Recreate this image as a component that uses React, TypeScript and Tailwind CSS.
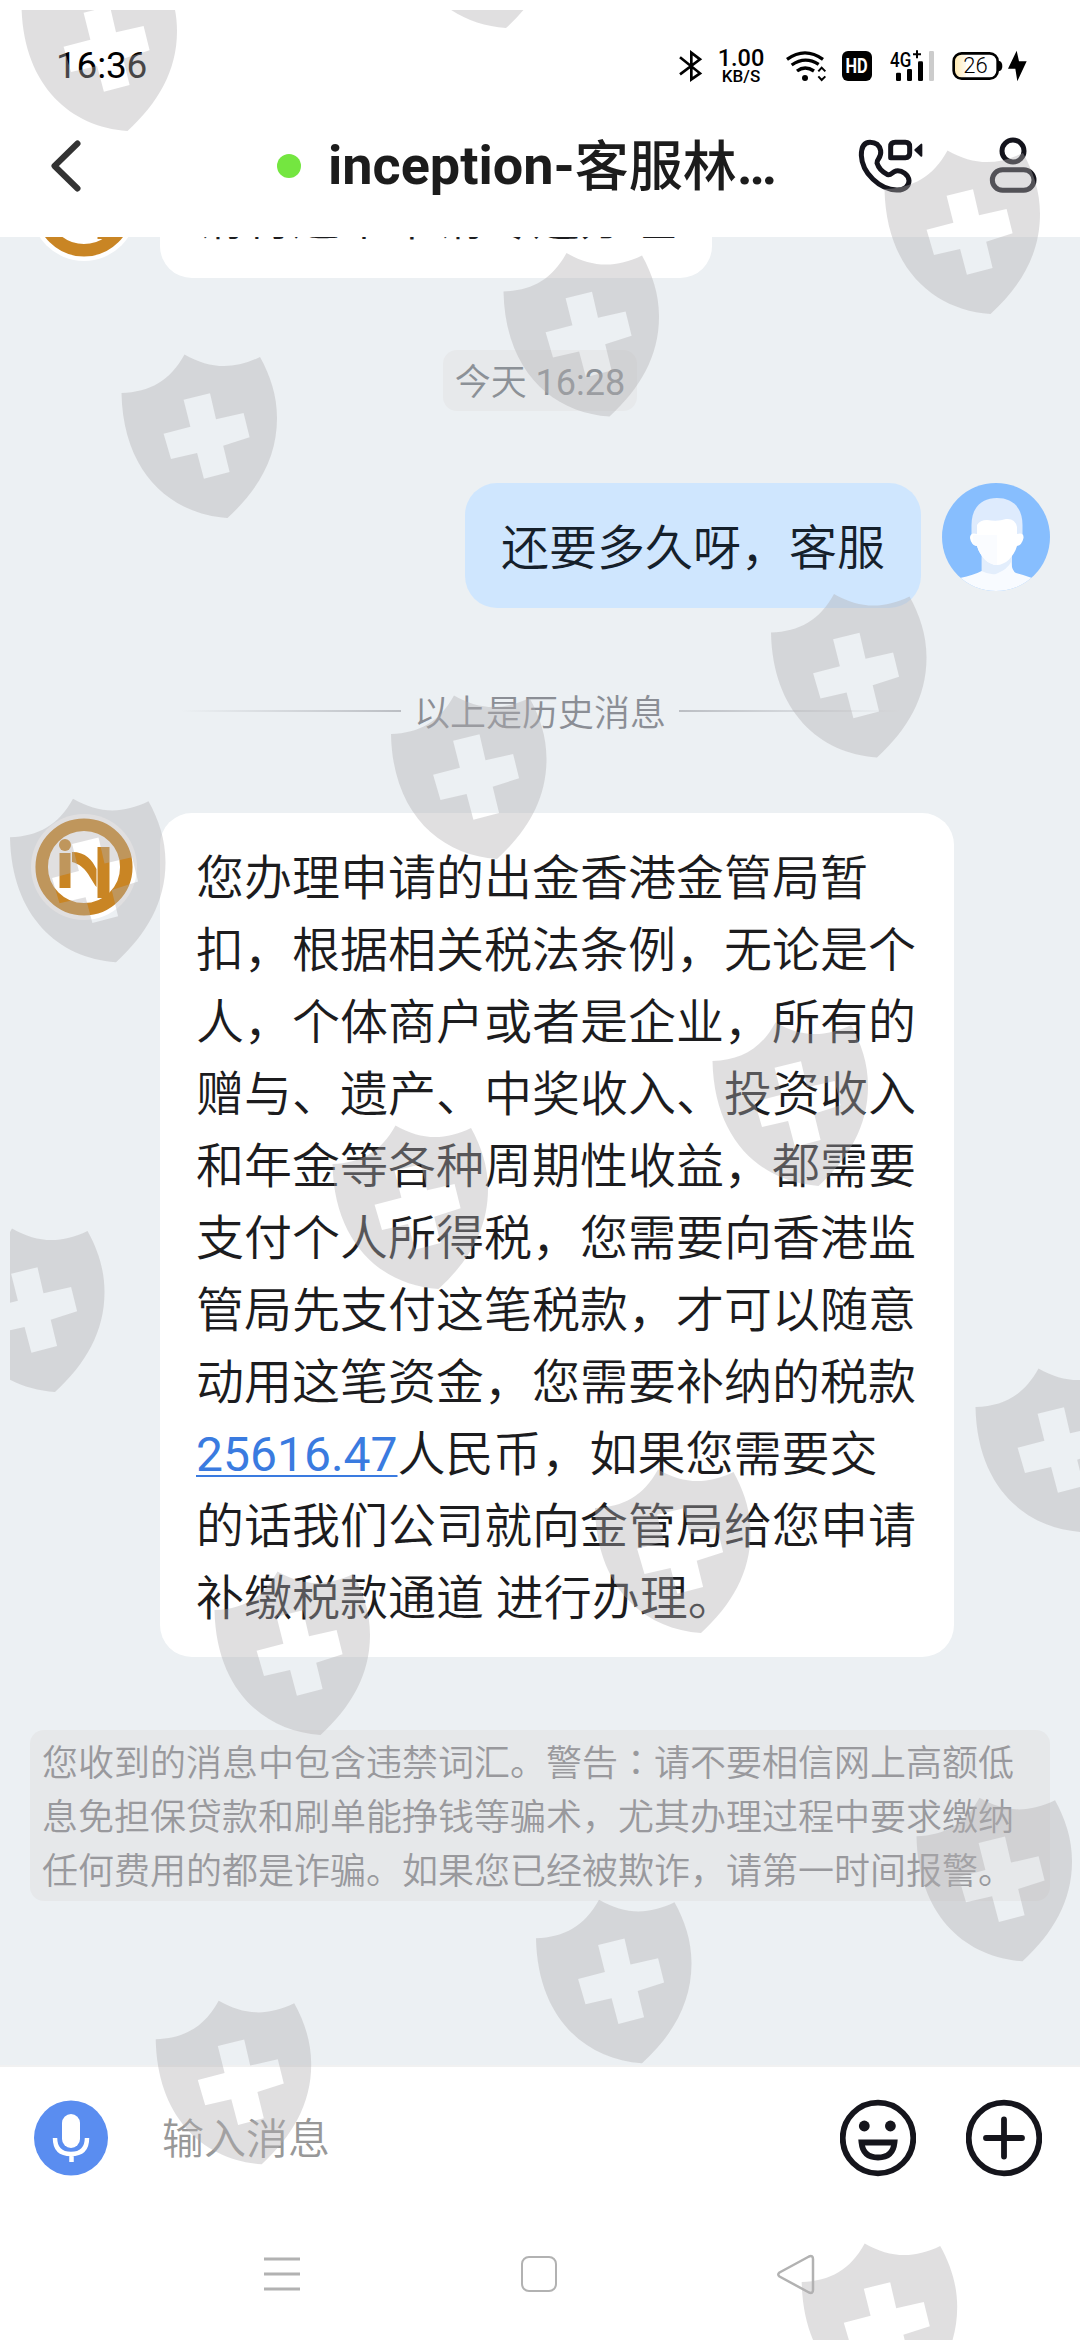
import type { ReactNode } from "react";

const messageLines: ReactNode[] = [
  "您办理申请的出金香港金管局暂",
  "扣，根据相关税法条例，无论是个",
  "人，个体商户或者是企业，所有的",
  "赠与、遗产、中奖收入、投资收入",
  "和年金等各种周期性收益，都需要",
  "支付个人所得税，您需要向香港监",
  "管局先支付这笔税款，才可以随意",
  "动用这笔资金，您需要补纳的税款",
  <>
    <a className="font-normal text-[#3a7be0] underline decoration-2 underline-offset-4">
      25616.47
    </a>
    人民币，如果您需要交
  </>,
  "的话我们公司就向金管局给您申请",
  "补缴税款通道 进行办理。",
];

const warningLines: ReactNode[] = [
  <>
    您收到的消息中包含违禁词汇。警告
    <span className="font-['Noto_Sans_CJK_TC',sans-serif]">：</span>
    请不要相信网上高额低
  </>,
  "息免担保贷款和刷单能挣钱等骗术，尤其办理过程中要求缴纳",
  "任何费用的都是诈骗。如果您已经被欺诈，请第一时间报警。",
];

// Top-left corner of every watermark shield on the screen
const shields = [
  [20, -37],
  [398.5, -140],
  [883, 146],
  [502, 248.5],
  [120, 350],
  [769.5, 589.5],
  [389.5, 691],
  [8.5, 794.3],
  [711, 1018],
  [331, 1121],
  [-52.5, 1224],
  [974, 1364],
  [593.5, 1465],
  [213, 1567],
  [915, 1793.3],
  [534.5, 1895.3],
  [154.2, 1996.3],
  [800.2, 2239],
];

function Watermark() {
  return (
    <svg
      className="absolute inset-0 pointer-events-none"
      width="1080"
      height="2340"
      viewBox="0 0 1080 2340"
    >
      <defs>
        <clipPath id="safe">
          <rect x="10" y="10" width="1070" height="2330" />
        </clipPath>
      </defs>
      <g clipPath="url(#safe)" fill="#b2b0b2" fillOpacity="0.4" fillRule="evenodd">
        {shields.map(([x, y], index) => (
          <path
            key={index}
            transform={`translate(${x} ${y})`}
            d="M1.5 43C30 42 50 31 64.5 4.5C90 19 113 20 140 7C150 25 157 45 157 68C157 108 138 140 107.5 168C50 164 3 122 1.5 43ZM63.6 49.7L90 43.3L96 69.3L123.6 63L129.6 87.3L103.2 95.7L109.6 122L83.9 128.7L77.1 103L51 109L43.6 83.7L70.4 76.7Z"
          />
        ))}
      </g>
    </svg>
  );
}

function StatusBar() {
  return (
    <div className="flex h-[88px] items-end justify-between pl-[56px] pr-[52px]">
      <span className="text-[37px] leading-[44px] tracking-[-0.2px] text-black">
        16:36
      </span>
      <div className="mb-[3px] flex h-[38px] items-center text-black">
        <svg width="26" height="32" viewBox="50 60 78 96" fill="none" stroke="#000" strokeWidth="8">
          <path d="M56 82L116 130L90 148V68L116 88L56 133" />
        </svg>
        <div className="mr-[2px] ml-[12px] flex w-[50px] flex-col items-center font-medium">
          <span className="text-[23.5px] leading-[20px]">1.00</span>
          <span className="text-[17px] leading-[16px]">KB/S</span>
        </div>
        <svg className="ml-[17px]" width="42" height="32" viewBox="370 60 126 96" fill="none" stroke="#000" strokeWidth="8">
          <path d="M376 88Q430 49 484 88M390 105Q430 77 471 103M406 123Q430 105 457 123" strokeWidth="10" />
          <circle cx="430" cy="144" r="9" fill="#000" stroke="none" />
          <path d="M470 124L480 113L491 124M470 139L480 150L491 139" strokeWidth="6" />
        </svg>
        <div className="ml-[15px] flex h-[30px] w-[30px] items-center justify-center rounded-[6px] bg-black">
          <span className="scale-x-[0.82] text-[20px] leading-none font-bold text-white">HD</span>
        </div>
        <div className="relative ml-[17px] h-[32px] w-[46px]">
          <svg width="46" height="32" viewBox="681 60 138 96">
            <rect x="702" y="128" width="15" height="25" rx="4" />
            <rect x="735" y="117" width="15" height="36" rx="4" />
            <rect x="768" y="94" width="15" height="59" rx="4" />
            <rect x="801" y="63" width="15" height="90" rx="4" fill="#ccc" />
            <path d="M753 73H777M765 61V85" stroke="#000" strokeWidth="6" />
          </svg>
          <span className="absolute top-[-1px] left-[1px] origin-left scale-x-[0.85] text-[20px] leading-[22px] font-medium">
            4G
          </span>
        </div>
        <div className="relative ml-[16px] h-[32px] w-[52px]">
          <svg width="52" height="32" viewBox="869 60 156 96">
            <defs>
              <linearGradient id="charge">
                <stop offset="0" stopColor="#ffe9ad" />
                <stop offset="1" stopColor="#fffaf0" />
              </linearGradient>
            </defs>
            <path d="M900 72H914V144H900Q879 144 879 122V94Q879 72 900 72Z" fill="url(#charge)" />
            <rect x="877" y="70" width="132" height="76" rx="24" fill="none" stroke="#000" strokeWidth="8" />
            <path d="M1012 92Q1023 94 1023 108Q1023 122 1012 124Z" />
          </svg>
          <span className="absolute inset-y-0 left-0 w-[49px] text-center text-[22px] leading-[32px] font-light">
            26
          </span>
        </div>
        <svg className="ml-[4px]" width="21" height="32" viewBox="1038 60 63 96">
          <path d="M1067 62L1041 116H1063L1069 154L1097 94H1074Z" />
        </svg>
      </div>
    </div>
  );
}

function Header() {
  return (
    <header className="flex h-[149px] items-center pt-[7px]">
      <svg className="ml-[48px] shrink-0" width="36" height="56" viewBox="48 138 36 56" fill="none">
        <path
          d="M77.5 143.5L54.5 166L77.5 188.5"
          stroke="#333"
          strokeWidth="6"
          strokeLinecap="round"
          strokeLinejoin="round"
        />
      </svg>
      <div className="ml-[193px] h-[24px] w-[24px] shrink-0 rounded-full bg-[#74e640]" />
      <h1 className="ml-[27px] w-[454px] text-[54px] leading-[64px] font-bold whitespace-nowrap text-[#1c1c1c]">
        inception-<span className="relative top-[2px] font-medium">客服林</span>…
      </h1>
      <svg className="ml-[76px]" width="68" height="60" viewBox="594 318 204 180" fill="none" stroke="#14141c" strokeWidth="15" strokeLinejoin="round">
        <path d="M630 337C612 337 604 352 604 376C606 430 660 479 710 480C734 481 747 468 747 452C746 434 726 420 708 423C696 426 694 437 683 434C668 427 655 412 651 399C650 386 665 385 662 362C658 344 646 337 630 337Z" />
        <path d="M692 383V350Q692 337 706 337H736Q749 337 749 350V370Q749 383 736 383Z" />
        <path d="M766 360L784 344V377Z" fill="#14141c" strokeWidth="6" />
      </svg>
      <svg className="ml-[63px]" width="48" height="60" viewBox="984 318 144 180" fill="none" stroke="#14141c" strokeWidth="15">
        <circle cx="1056" cy="363" r="33" />
        <rect x="994" y="419" width="125" height="62" rx="31" />
      </svg>
    </header>
  );
}

function AgentAvatar() {
  return (
    <svg className="shrink-0" width="108" height="108" viewBox="0 0 108 108">
      <circle cx="54" cy="54" r="53" fill="#fff" />
      <circle cx="54" cy="54" r="42.3" fill="none" stroke="#c98524" strokeWidth="12.5" />
      <g fill="#c98524">
        <circle cx="35" cy="32" r="6" />
        <rect x="29.5" y="40" width="11" height="35" />
        <path d="M42 39C56 39 62 47 66.5 56V74C60 66 57 53 42 49Z" />
        <rect x="67.5" y="34" width="12" height="51" />
      </g>
    </svg>
  );
}

function UserAvatar() {
  return (
    <svg className="shrink-0" width="108" height="108" viewBox="0 0 108 108">
      <defs>
        <clipPath id="round">
          <circle cx="54" cy="54" r="54" />
        </clipPath>
      </defs>
      <g clipPath="url(#round)">
        <rect width="108" height="108" fill="#87befe" />
        <path d="M39.6 72V89L54 96L70 89V72Z" fill="#e3eefc" />
        <path d="M18 95Q32 92 39.6 88Q47 92 54 91Q66 86 69 79Q70 88 74 90Q82 92 90 95V108H18Z" fill="#f8fbff" />
        <path d="M29.5 54V42C29.5 24 40 15 55 15S80.5 24 80.5 42V54Z" fill="#deebfd" />
        <path d="M35 42Q38 37 45 37Q56 39 64 36Q73 35 75 44V51Q82 49 81.5 55Q80 62 75 63C72 74 63 82 55 82S38 74 35 63Q29 62 28 55Q28 49 35 51Z" fill="#fff" />
        <path d="M55 52V82C47 82 38 74 35 63Q33 63 31 61V52Z" fill="#fafcff" />
      </g>
    </svg>
  );
}

function Composer() {
  return (
    <div className="flex h-[143px] items-center border-t-2 border-[#f1f1f1] bg-white pl-[34px]">
      <svg width="74" height="76" viewBox="0 0 74 76" fill="none">
        <ellipse cx="37" cy="38" rx="37" ry="37.5" fill="#5a8df0" />
        <rect x="28" y="14" width="18" height="34" rx="9" fill="#fff" />
        <path d="M21 38Q21 54 37 54T53 38M37.5 54V62" stroke="#fff" strokeWidth="4.5" />
      </svg>
      <span className="ml-[54px] flex-1 pt-[5px] text-[42px] leading-[60px] font-[350] text-[#989898]">
        输入消息
      </span>
      <svg width="76" height="78" viewBox="0 0 76 78" fill="none" stroke="#15151c" strokeWidth="5.8">
        <circle cx="38" cy="39" r="35.3" />
        <circle cx="24.3" cy="27" r="5.4" fill="#15151c" stroke="none" />
        <circle cx="50.4" cy="27" r="5.4" fill="#15151c" stroke="none" />
        <path d="M21.5 43.5H54.5Q53 58.5 38 58.5T21.5 43.5Z" />
      </svg>
      <svg className="mr-[38px] ml-[50px]" width="76" height="78" viewBox="0 0 76 78" fill="none" stroke="#15151c" strokeWidth="5.8" strokeLinecap="round">
        <circle cx="38" cy="39" r="35.3" />
        <path d="M20 39H56M38 20.5V57.5" />
      </svg>
    </div>
  );
}

function NavBar() {
  return (
    <nav className="flex h-[132px] items-center justify-between bg-white px-[262px]">
      <svg width="40" height="40" viewBox="0 0 40 40" fill="none" stroke="#b2b2b2" strokeWidth="3">
        <path d="M2 5H38M2 20H38M2 35H38" />
      </svg>
      <div className="h-[36px] w-[36px] rounded-[8px] border-[2.5px] border-[#b2b2b2]" />
      <svg width="42" height="42" viewBox="0 0 42 42" fill="none" stroke="#b2b2b2" strokeWidth="2.5" strokeLinejoin="round">
        <path d="M33 3.5Q37 2 37 6V37Q37 41 33 39.5L3.5 23.5Q1 21.5 3.5 19.5Z" />
      </svg>
    </nav>
  );
}

export default function App() {
  return (
    <div className="relative flex h-[2340px] w-[1080px] flex-col overflow-hidden bg-white font-[Roboto,'Noto_Sans_CJK_SC',sans-serif]">
      <StatusBar />
      <Header />

      <main className="flex h-[1828px] flex-col overflow-hidden bg-[#ecf0f3] text-[48px] leading-[72px] font-[350] text-[#1c1c1e]">
        {/* Older message, scrolled half under the header */}
        <div className="-mt-[83px] flex shrink-0 items-start pl-[30px]">
          <AgentAvatar />
          <div className="mt-px ml-[22px] rounded-[32px] bg-white px-[36px] pt-[27.5px] pb-[23.5px] whitespace-nowrap">
            请将这个申请尽速办理
          </div>
        </div>

        <div className="mt-[72px] flex shrink-0 justify-center">
          <span className="h-[61px] rounded-[14px] bg-[#e7e9eb] px-[12px] text-[36px] leading-[66px] text-[#8c9197]">
            今天 <span className="font-normal">16:28</span>
          </span>
        </div>

        <div className="mt-[72px] flex shrink-0 items-start justify-end pr-[30px]">
          <div className="mr-[21px] rounded-[32px] bg-[#cfe6fe] px-[36px] pt-[29.5px] pb-[23.5px] whitespace-nowrap text-[#15202b]">
            还要多久呀，客服
          </div>
          <UserAvatar />
        </div>

        <div className="mt-[76px] flex shrink-0 items-center justify-center gap-[13px] text-[36px] leading-[54px] text-[#8b8e95]">
          <div className="h-[2px] w-[221px] bg-linear-to-l from-[#bbbec3] to-[#bbbec300]" />
          <span className="relative top-[3px]">以上是历史消息</span>
          <div className="h-[2px] w-[221px] bg-linear-to-r from-[#bbbec3] to-[#bbbec300]" />
        </div>

        <div className="mt-[75px] flex shrink-0 items-start pl-[30px]">
          <AgentAvatar />
          <div className="ml-[22px] w-[794px] rounded-[32px] bg-white pt-[30px] pb-[22px] pl-[36px]">
            {messageLines.map((line, index) => (
              <div key={index} className="whitespace-nowrap">
                {line}
              </div>
            ))}
          </div>
        </div>

        <div className="mx-[30px] mt-[73px] shrink-0 rounded-[14px] bg-[#e6e8ea] px-[12px] pt-[3px] pb-[2px] text-[36px] leading-[54px] text-[#99999d]">
          {warningLines.map((line, index) => (
            <div key={index} className="whitespace-nowrap">
              {line}
            </div>
          ))}
        </div>
      </main>

      <Composer />
      <NavBar />
      <Watermark />
    </div>
  );
}
